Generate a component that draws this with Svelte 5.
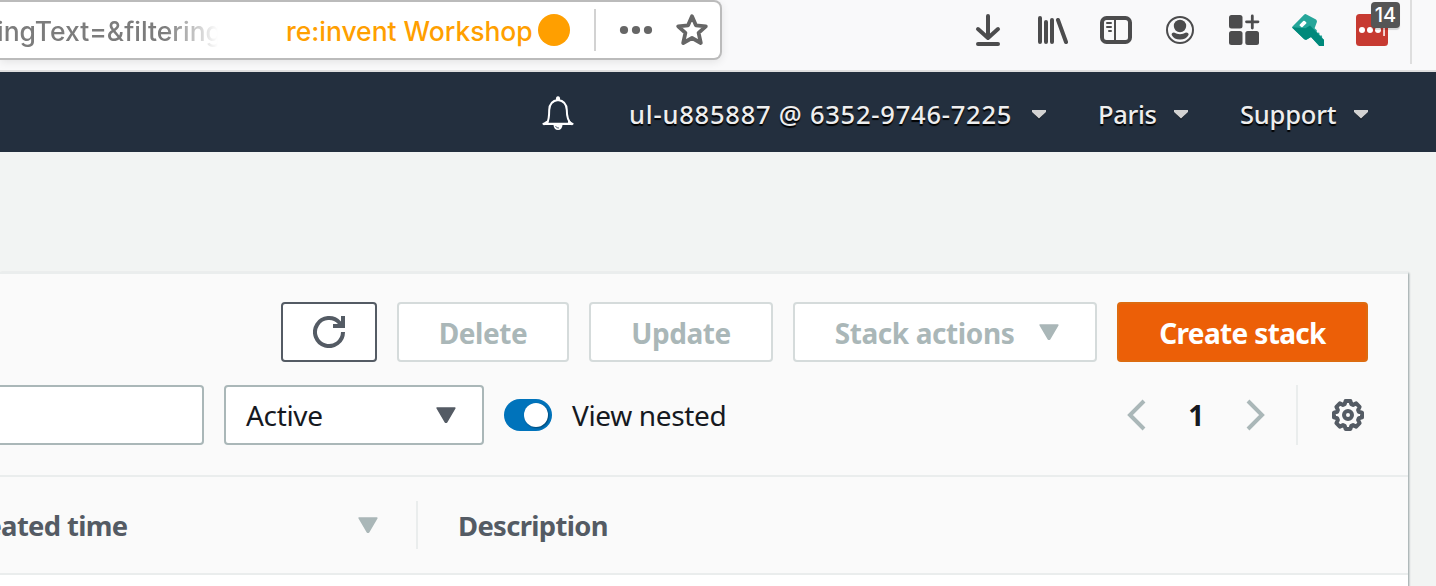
<script>
  const account = 'ul-u885887 @ 6352-9746-7225';
  let nested = $state(true);
</script>

{#snippet caret(cls)}
  <svg class="caret {cls}" width="20" height="16" viewBox="0 0 20 16"><path d="M1.2 1H18.8L10.6 15Q10 15.8 9.4 15Z" fill="currentColor" stroke="currentColor" stroke-width="1.6" stroke-linejoin="round" /></svg>
{/snippet}

{#snippet navCaret()}
  <svg class="nav-caret" width="16" height="10" viewBox="0 0 16 10"><path d="M1 2H15L8 10Z" fill="#111922" /><path d="M1 0H15V2L8 8.5L1 2Z" fill="#d2d2d2" /></svg>
{/snippet}

<div class="page">
  <div class="browser">
    <div class="urlbar">
      <div class="url"><span class="url-text">ingText=&amp;filtering</span></div>
      <span class="container-name">re:invent Workshop</span>
      <i class="dot"></i>
      <i class="url-sep"></i>
      <svg class="more" width="34" height="10" viewBox="0 0 34 10" fill="#666"><circle cx="5" cy="5" r="4.1" /><circle cx="17" cy="5" r="4.1" /><circle cx="29" cy="5" r="4.1" /></svg>
      <svg class="star" width="34" height="34" viewBox="0 0 34 34" fill="none" stroke="#666" stroke-width="3.8" stroke-linejoin="round"><path d="M17 3.2L20.9 12.3L30.8 13.3L23.6 19.9L25.8 30L17 25L8.2 30L10.4 19.9L3.2 13.3L13.1 12.3Z" /></svg>
    </div>
    <div class="tools">
      <svg width="32" height="36" viewBox="0 0 32 36" fill="none" stroke="#4c4c4d" stroke-width="4" stroke-linecap="round" stroke-linejoin="round"><path d="M16 4V25M6 17L16 26L26 17M6 32H26" /></svg>
      <svg width="32" height="36" viewBox="0 0 32 36" fill="none" stroke="#4c4c4d" stroke-width="4" stroke-linecap="round"><path d="M4 6V30M10 10V30M16 8V30M22 8L30 30" /></svg>
      <svg width="32" height="36" viewBox="0 0 32 36" fill="none" stroke="#4c4c4d"><rect x="2" y="6" width="28" height="24" rx="4.5" stroke-width="4" /><path d="M15 7V29" stroke-width="2" /><path d="M7 11H11M7 15H11M9 19H11" stroke-width="2" stroke-linecap="round" /></svg>
      <svg width="32" height="36" viewBox="0 0 32 36" fill="#4c4c4d"><circle cx="16" cy="18" r="13" fill="none" stroke="#4c4c4d" stroke-width="2" /><circle cx="16" cy="14" r="6.2" /><path d="M10 20.5Q16 24 22 20.5Q25 20.5 24.5 23Q22 27.5 16 27.5Q10 27.5 7.7 23Q7.3 20.5 10 20.5Z" /></svg>
      <svg width="32" height="36" viewBox="0 0 32 36" fill="#4c4c4d"><rect x="1" y="3" width="13.5" height="13.5" rx="2.5" /><rect x="1" y="19" width="13.5" height="14" rx="2.5" /><rect x="17.3" y="19" width="13.7" height="14" rx="2.5" /><path d="M24.3 4V16M18.5 9.8H30" stroke="#4c4c4d" stroke-width="2.8" stroke-linecap="round" /></svg>
      <svg width="32" height="36" viewBox="0 0 32 36"><path d="M12.3 2.5Q13.3 1.7 14.5 2.4L24 7.5Q25.2 8.5 24.9 10L22.6 16.2L24.8 18.3L24.8 20.5L27.3 20.7L27.6 23.4L30 23.6L30.2 26.2L32 27.8V34H27.3L19 25L14.8 27.4Q13.3 28.2 12 27L.5 16Q-.2 15.2.5 14.4Z" fill="#26a69a" /><path d="M.2 15.3L13.5 16.2L18 13.5L32 28V34H27.3L19 25L14.8 27.4Q13.3 28.2 12 27L.5 16Z" fill="#00897b" /><path d="M7.8 12.4L11.2 9Q12 8.4 12.8 9L14.2 10.3Q14.7 10.9 14.2 11.6L10.6 15Q9.9 15.7 9.2 15L7.8 13.8Q7.1 13.1 7.8 12.4Z" fill="#fff" /></svg>
      <div class="ext">
        <svg width="32" height="36" viewBox="0 0 32 36"><rect y="2" width="32" height="32" rx="3.5" fill="#c73a31" /><g fill="#fff"><circle cx="6" cy="18" r="3" /><circle cx="14" cy="18" r="3" /><circle cx="22" cy="18" r="3" /><rect x="27.3" y="12" width="1.5" height="12" /></g></svg>
        <span class="badge">14</span>
      </div>
    </div>
    <i class="tools-sep"></i>
  </div>

  <nav>
    <svg class="bell" width="34" height="36" viewBox="0 0 34 36"><path d="M6 28.5Q8.2 24.5 8.2 15Q8.5 6 17 5Q25.5 6 25.8 15Q25.8 24.5 30 28.5" fill="none" stroke="#fff" stroke-width="2" /><path d="M15 5Q14.5 1.4 17 1.2Q19.5 1.4 19 5Z" fill="#fff" /><path d="M2.5 28.8H31.5M6 27L3 29M28 27L31 29" stroke="#fff" stroke-width="2.2" stroke-linecap="round" /><path d="M12.5 30H21.5Q21 35 17 35Q13 35 12.5 30Z" fill="#fff" /><path d="M14.5 31Q15.5 33.5 18 33" fill="none" stroke="#536071" /></svg>
    <span class="account">{account}</span>{@render navCaret()}
    <span class="region">Paris</span>{@render navCaret()}
    <span class="support">Support</span>{@render navCaret()}
  </nav>

  <main>
    <section class="card">
      <header>
        <div class="actions">
          <button class="refresh" aria-label="Refresh"><svg width="32" height="32" viewBox="0 0 32 32" fill="none" stroke="#545b64" stroke-width="4"><path d="M30 16A14 14 0 1 1 26.5 6.8L29 10M30 0V10H20" /></svg></button>
          <button class="delete" disabled><span>Delete</span></button>
          <button class="update" disabled><span>Update</span></button>
          <button class="stack" disabled><span>Stack actions</span>{@render caret('muted')}</button>
          <button class="create"><span>Create stack</span></button>
        </div>
        <div class="filters">
          <div class="search"></div>
          <div class="select"><span>Active</span>{@render caret('dark')}</div>
          <button class="toggle" class:off={!nested} aria-label="View nested" onclick={() => (nested = !nested)}><i></i></button>
          <span class="nested">View nested</span>
          <div class="pager">
            <svg width="20" height="32" viewBox="0 0 20 32" fill="none" stroke="#aab7b8" stroke-width="4"><path d="M18 2L4 16L18 30" /></svg>
            <b>1</b>
            <svg width="20" height="32" viewBox="0 0 20 32" fill="none" stroke="#aab7b8" stroke-width="4"><path d="M2 2L16 16L2 30" /></svg>
          </div>
          <i class="sep"></i>
          <svg class="gear" width="32" height="32" viewBox="0 0 32 32" fill="none" stroke="#545b64" stroke-width="4" stroke-linejoin="round"><path d="M13.6 2H18.4L19.3 5.2L21 5.9L24.2 4.4L27.6 7.8L26.1 11L26.8 12.7L30 13.6V18.4L26.8 19.3L26.1 21L27.6 24.2L24.2 27.6L21 26.1L19.3 26.8L18.4 30H13.6L12.7 26.8L11 26.1L7.8 27.6L4.4 24.2L5.9 21L5.2 19.3L2 18.4V13.6L5.2 12.7L5.9 11L4.4 7.8L7.8 4.4L11 5.9L12.7 5.2Z" /><circle cx="16" cy="16" r="4" /></svg>
        </div>
      </header>
      <div class="columns">
        <div class="created"><span>Created time</span>{@render caret('muted')}</div>
        <div class="description"><span>Description</span></div>
      </div>
    </section>
  </main>
</div>

<style>
  :global(body) { margin: 0; overflow: hidden; }
  .page { width: 1436px; height: 586px; overflow: hidden; background: #f2f4f3; font: 28px/40px "Noto Sans", "Open Sans", sans-serif; color: #16191f; display: flex; flex-direction: column; }
  .page :global(*) { box-sizing: border-box; }
  span, b { white-space: nowrap; }
  svg { display: block; flex: none; }
  i { display: block; flex: none; }
  .browser { height: 72px; flex: none; display: flex; background: #f9f9fa; border-bottom: 2px solid #dfdfdf; font-family: Inter, sans-serif; }
  .urlbar { width: 722px; height: 60px; flex: none; display: flex; align-items: center; background: #fff; border: 2px solid #bbb; border-left: 0; border-radius: 0 8px 8px 0; box-shadow: 0 2px 8px rgba(0, 0, 0, .09); }
  .url { width: 218px; margin-right: 68px; overflow: hidden; color: #7c7c7c; font-weight: 450; mask-image: linear-gradient(to right, #000 165px, transparent 218px); }
  .url-text { font-size: 26.5px; letter-spacing: 0; margin-left: -3px; position: relative; top: 1px; }
  .container-name { width: 246px; font-size: 26.5px; font-weight: 450; color: #ff9f00; letter-spacing: -.03px; position: relative; top: 1px; }
  .dot { width: 32px; height: 32px; margin-left: 6px; border-radius: 50%; background: #ff9f00; }
  .url-sep { width: 2px; height: 42px; margin-left: 24px; background: #d2d2d2; }
  .more { margin-left: 23px; }
  .star { margin-left: 22px; }
  .tools { display: flex; gap: 32px; margin: 12px 0 0 250px; }
  .ext { position: relative; width: 32px; }
  .badge { position: absolute; left: 15px; top: -10px; width: 29px; height: 26px; border-radius: 4px; background: #555; color: #fff; font: 500 20px/27px Inter, sans-serif; text-align: center; box-shadow: 0 2px 1px rgba(0, 0, 0, .15); }
  .tools-sep { width: 2px; height: 64px; margin-left: 22px; background: #dedede; }
  nav { height: 80px; flex: none; display: flex; align-items: center; background: #232f3e; color: #eee; font-size: 25.5px; font-weight: 500; text-shadow: 0 2px 1px #000; }
  nav span { padding-top: 3px; }
  .bell { margin: 2px 0 0 541px; }
  .account { width: 385px; margin-left: 54px; letter-spacing: .78px; }
  .region { width: 58px; margin-left: 51px; letter-spacing: -.3px; }
  .support { width: 96px; margin-left: 51px; letter-spacing: -.2px; }
  .nav-caret { margin-left: 17px; margin-top: 5px; }
  main { flex: 1; padding-top: 120px; }
  .card { width: 1408px; height: 320px; background: #fff; border-top: 2px solid #eaeded; box-shadow: 1px 1px 2px rgba(0, 28, 36, .4); }
  header { height: 203px; background: #fafafa; padding: 28px 40px 0 0; border-bottom: 2px solid #eaeded; }
  .actions { display: flex; justify-content: flex-end; gap: 20px; }
  button { padding: 0; margin: 0; font: inherit; }
  .actions button { height: 60px; display: flex; align-items: center; justify-content: center; font-weight: 700; letter-spacing: -.45px; border: 2px solid #d5dbdb; border-radius: 4px; background: #fff; color: #aab7b8; }
  .actions button span { padding-top: 1px; }
  .actions .refresh { width: 96px; border-color: #545b64; }
  .delete { width: 172px; }
  .update { width: 184px; }
  .actions .stack { width: 304px; gap: 25px; padding-left: 4px; letter-spacing: -.4px; }
  .actions .create { width: 251px; background: #ec5f07; border-color: #dd6b10; color: #fff; letter-spacing: -.65px; }
  .caret.muted { color: #aab7b8; }
  .caret.dark { color: #545b64; }
  .filters { display: flex; align-items: center; height: 60px; margin-top: 23px; letter-spacing: -.35px; }
  .search { width: 204px; height: 60px; background: #fff; border: 2px solid #aab7b8; border-left: 0; border-radius: 0 4px 4px 0; }
  .select { width: 260px; height: 60px; margin-left: 20px; padding: 0 26px 0 20px; display: flex; justify-content: space-between; align-items: center; background: #fff; border: 2px solid #aab7b8; border-radius: 4px; }
  .toggle { width: 48px; height: 32px; margin: 0 20px; padding: 4px; display: flex; justify-content: flex-end; border: 0; border-radius: 16px; background: #0073bb; }
  .toggle.off { justify-content: flex-start; background: #687078; }
  .toggle i { width: 24px; height: 24px; border-radius: 50%; background: #fff; box-shadow: 1px 1px 2px rgba(0, 0, 0, .4); }
  .pager { display: flex; align-items: center; width: 140px; justify-content: space-between; margin-left: auto; }
  .sep { width: 2px; height: 60px; margin-left: 30px; background: #eaeded; }
  .gear { margin: 0 4px 0 34px; }
  .columns { height: 98px; display: flex; align-items: center; background: #fafafa; border-bottom: 2px solid #eaeded; color: #545b64; font-size: 27.4px; font-weight: 700; letter-spacing: -.65px; }
  .created { width: 418px; height: 48px; padding-right: 38px; display: flex; align-items: center; justify-content: space-between; border-right: 2px solid #eaeded; }
  .created span { width: 127.5px; display: flex; justify-content: flex-end; padding-top: 1px; }
  .description { padding: 2px 0 0 40px; }
</style>
